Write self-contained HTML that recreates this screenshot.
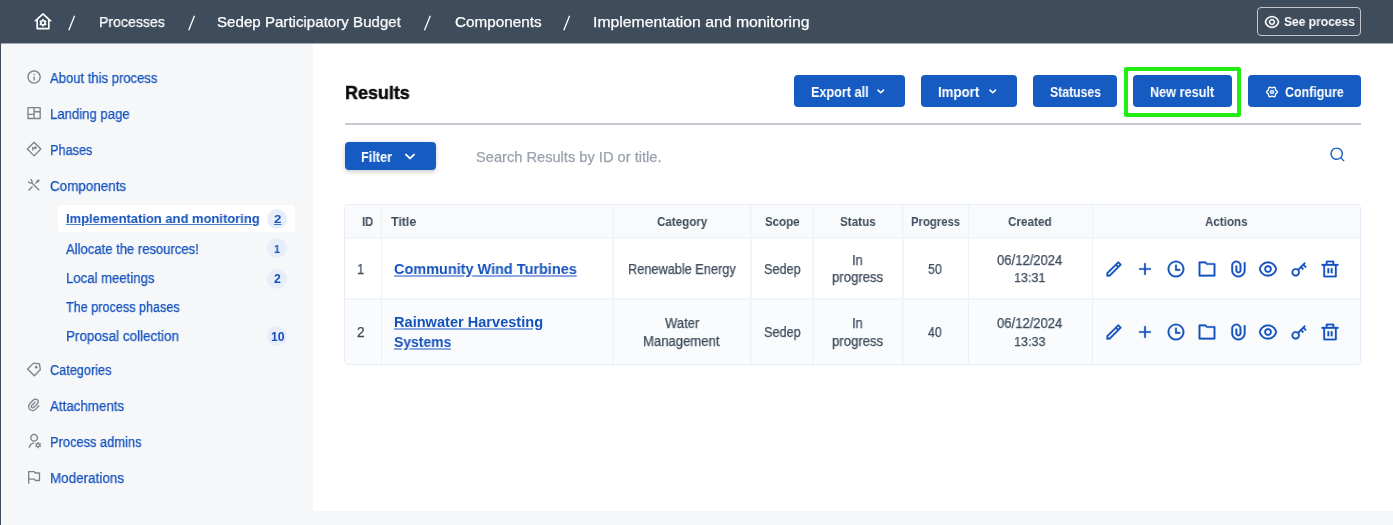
<!DOCTYPE html>
<html><head><meta charset="utf-8"><title>Results</title>
<style>
html,body{margin:0;padding:0;}
body{width:1393px;height:525px;overflow:hidden;position:relative;font-family:"Liberation Sans", sans-serif;background:#f6f7f9;}
.t{position:absolute;white-space:nowrap;will-change:transform;}
svg{display:block}
</style></head><body>
<div style="position:absolute;left:313px;top:43px;width:1080px;height:468px;background:#fff"></div>
<div style="position:absolute;left:0px;top:43px;width:1px;height:482px;background:#3e4c5c"></div>
<div style="position:absolute;left:0px;top:0px;width:1393px;height:43px;background:#3e4c5c"></div>
<div style="position:absolute;left:0px;top:43px;width:1393px;height:1px;background:rgba(62,76,92,.45)"></div>
<svg style="position:absolute;left:33.20px;top:11.60px;" width="20" height="20" viewBox="0 0 24 24" fill="#fff"><path d="M19 21H5C4.44772 21 4 20.5523 4 20V11L1 11L11.3273 1.6115C11.7087 1.26475 12.2913 1.26475 12.6727 1.6115L23 11L20 11V20C20 20.5523 19.5523 21 19 21ZM6 19H18V9.15745L12 3.7029L6 9.15745V19ZM8.59117 13.8089C8.52937 13.5486 8.50001 13.2762 8.50001 13C8.50001 12.7238 8.52937 12.4514 8.59117 12.1911L7.59688 11.6172L8.59688 9.88517L9.59275 10.4601C9.98516 10.0889 10.4647 9.80822 10.9995 9.65185V8.5H12.9995V9.65185C13.5343 9.80822 14.0138 10.0889 14.4062 10.4601L15.4021 9.88517L16.4021 11.6172L15.4078 12.1911C15.4696 12.4514 15.5 12.7238 15.5 13C15.5 13.2762 15.4696 13.5486 15.4078 13.8089L16.4021 14.3828L15.4021 16.1148L14.4062 15.5399C14.0138 15.9111 13.5343 16.1918 12.9995 16.3482V17.5H10.9995V16.3482C10.4647 16.1918 9.98516 15.9111 9.59275 15.5399L8.59688 16.1148L7.59688 14.3828L8.59117 13.8089ZM12 14.5C12.8284 14.5 13.5 13.8284 13.5 13C13.5 12.1716 12.8284 11.5 12 11.5C11.1716 11.5 10.5 12.1716 10.5 13C10.5 13.8284 11.1716 14.5 12 14.5Z"/></svg>
<svg style="position:absolute;left:0;top:0" width="1393" height="43"><line x1="74.6" y1="15.8" x2="68.8" y2="30.2" stroke="#fff" stroke-width="1.3"/></svg>
<svg style="position:absolute;left:0;top:0" width="1393" height="43"><line x1="194.5" y1="15.8" x2="188.7" y2="30.2" stroke="#fff" stroke-width="1.3"/></svg>
<svg style="position:absolute;left:0;top:0" width="1393" height="43"><line x1="430.3" y1="15.8" x2="424.5" y2="30.2" stroke="#fff" stroke-width="1.3"/></svg>
<svg style="position:absolute;left:0;top:0" width="1393" height="43"><line x1="569.6" y1="15.8" x2="563.8" y2="30.2" stroke="#fff" stroke-width="1.3"/></svg>
<div style="position:absolute;left:1257px;top:7px;width:102px;height:27px;border:1px solid #c3c7cd;border-radius:4px"></div>
<svg style="position:absolute;left:1263.80px;top:13.90px;" width="16" height="16" viewBox="0 0 24 24" fill="#fff" stroke="#fff" stroke-width="0.4"><path d="M12.0003 3C17.3924 3 21.8784 6.87976 22.8189 12C21.8784 17.1202 17.3924 21 12.0003 21C6.60812 21 2.12215 17.1202 1.18164 12C2.12215 6.87976 6.60812 3 12.0003 3ZM12.0003 19C16.2359 19 19.8603 16.052 20.7777 12C19.8603 7.94803 16.2359 5 12.0003 5C7.7646 5 4.14022 7.94803 3.22278 12C4.14022 16.052 7.7646 19 12.0003 19ZM12.0003 16.5C9.51498 16.5 7.50026 14.4853 7.50026 12C7.50026 9.51472 9.51498 7.5 12.0003 7.5C14.4855 7.5 16.5003 9.51472 16.5003 12C16.5003 14.4853 14.4855 16.5 12.0003 16.5ZM12.0003 14.5C13.381 14.5 14.5003 13.3807 14.5003 12C14.5003 10.6193 13.381 9.5 12.0003 9.5C10.6196 9.5 9.50026 10.6193 9.50026 12C9.50026 13.3807 10.6196 14.5 12.0003 14.5Z"/></svg>
<svg style="position:absolute;left:25.90px;top:69.40px;" width="16.2" height="16.2" viewBox="0 0 24 24" fill="#7b838d"><path d="M12 22C6.47715 22 2 17.5228 2 12C2 6.47715 6.47715 2 12 2C17.5228 2 22 6.47715 22 12C22 17.5228 17.5228 22 12 22ZM12 20C16.4183 20 20 16.4183 20 12C20 7.58172 16.4183 4 12 4C7.58172 4 4 7.58172 4 12C4 16.4183 7.58172 20 12 20ZM11 7H13V9H11V7ZM11 11H13V17H11V11Z"/></svg>
<svg style="position:absolute;left:25.90px;top:105.40px;" width="16.2" height="16.2" viewBox="0 0 24 24" fill="#7b838d"><path d="M22 20C22 20.5523 21.5523 21 21 21H3C2.44772 21 2 20.5523 2 20V4C2 3.44772 2.44772 3 3 3H21C21.5523 3 22 3.44772 22 4V20ZM11 15H4V19H11V15ZM20 11H13V19H20V11ZM11 5H4V13H11V5ZM20 5H13V9H20V5Z"/></svg>
<svg style="position:absolute;left:25.90px;top:141.40px;" width="16.2" height="16.2" viewBox="0 0 24 24" fill="#7b838d"><path d="M9 10C9 9.44772 9.44772 9 10 9H13V6.5L16.5 10L13 13.5V11H11V14H9V10ZM12.7071 1.29289L22.7071 11.2929C23.0976 11.6834 23.0976 12.3166 22.7071 12.7071L12.7071 22.7071C12.3166 23.0976 11.6834 23.0976 11.2929 22.7071L1.29289 12.7071C0.902369 12.3166 0.902369 11.6834 1.29289 11.2929L11.2929 1.29289C11.6834 0.902369 12.3166 0.902369 12.7071 1.29289ZM3.41421 12L12 20.5858L20.5858 12L12 3.41421L3.41421 12Z"/></svg>
<svg style="position:absolute;left:25.90px;top:177.40px;" width="16.2" height="16.2" viewBox="0 0 24 24" fill="#7b838d"><path d="M5.32943 3.27158C6.56252 2.8332 7.9923 3.10749 8.97927 4.09446C10.1002 5.21537 10.3019 6.90741 9.5843 8.23385L20.293 18.9437L18.8788 20.3579L8.16982 9.64875C6.84325 10.3669 5.15069 10.1654 4.02952 9.04421C3.04227 8.05696 2.7681 6.62665 3.20701 5.39332L5.44373 7.63C6.02952 8.21578 6.97927 8.21578 7.56505 7.63C8.15084 7.04421 8.15084 6.09446 7.56505 5.50868L5.32943 3.27158ZM15.6968 5.15512L18.8788 3.38736L20.293 4.80157L18.5252 7.98355L16.7574 8.3371L14.6361 10.4584L13.2219 9.04421L15.3432 6.92289L15.6968 5.15512ZM8.97927 13.2868L10.3935 14.7011L5.09018 20.0044C4.69966 20.3949 4.06649 20.3949 3.67597 20.0044C3.31334 19.6417 3.28744 19.0699 3.59826 18.6774L3.67597 18.5902L8.97927 13.2868Z"/></svg>
<svg style="position:absolute;left:25.90px;top:361.40px;" width="16.2" height="16.2" viewBox="0 0 24 24" fill="#7b838d"><path d="M10.9042 2.1001L20.8037 3.51431L22.2179 13.4138L13.0255 22.6062C12.635 22.9967 12.0019 22.9967 11.6113 22.6062L1.71184 12.7067C1.32131 12.3162 1.32131 11.683 1.71184 11.2925L10.9042 2.1001ZM11.6113 4.22142L3.83316 11.9996L12.3184 20.4849L20.0966 12.7067L19.0359 5.28208L11.6113 4.22142ZM13.7327 10.5854C12.9516 9.80433 12.9516 8.538 13.7327 7.75695C14.5137 6.9759 15.78 6.9759 16.5611 7.75695C17.3421 8.538 17.3421 9.80433 16.5611 10.5854C15.78 11.3664 14.5137 11.3664 13.7327 10.5854Z"/></svg>
<svg style="position:absolute;left:25.90px;top:397.40px;" width="16.2" height="16.2" viewBox="0 0 24 24" fill="#7b838d"><path d="M14.8287 7.75737L9.1718 13.4142C8.78127 13.8047 8.78127 14.4379 9.1718 14.8284C9.56232 15.219 10.1955 15.219 10.586 14.8284L16.2429 9.17158C17.4144 8.00001 17.4144 6.10052 16.2429 4.92894C15.0713 3.75737 13.1718 3.75737 12.0002 4.92894L6.34337 10.5858C4.39075 12.5384 4.39075 15.7042 6.34337 17.6569C8.29599 19.6095 11.4618 19.6095 13.4144 17.6569L19.0713 12L20.4855 13.4142L14.8287 19.0711C12.095 21.8047 7.66283 21.8047 4.92916 19.0711C2.19549 16.3374 2.19549 11.9052 4.92916 9.17158L10.586 3.51473C12.5386 1.56211 15.7045 1.56211 17.6571 3.51473C19.6097 5.46735 19.6097 8.63317 17.6571 10.5858L12.0002 16.2427C10.8287 17.4142 8.92916 17.4142 7.75759 16.2427C6.58601 15.0711 6.58601 13.1716 7.75759 12L13.4144 6.34316L14.8287 7.75737Z"/></svg>
<svg style="position:absolute;left:25.90px;top:433.40px;" width="16.2" height="16.2" viewBox="0 0 24 24" fill="#7b838d"><path d="M12 14V16C8.68629 16 6 18.6863 6 22H4C4 17.5817 7.58172 14 12 14ZM12 13C8.685 13 6 10.315 6 7C6 3.685 8.685 1 12 1C15.315 1 18 3.685 18 7C18 10.315 15.315 13 12 13ZM12 11C14.21 11 16 9.21 16 7C16 4.79 14.21 3 12 3C9.79 3 8 4.79 8 7C8 9.21 9.79 11 12 11ZM14.5946 18.8115C14.5327 18.5511 14.5 18.2794 14.5 18C14.5 17.7207 14.5327 17.449 14.5945 17.1886L13.6029 16.6161L14.6029 14.884L15.5952 15.4569C15.9883 15.0851 16.4676 14.8034 17 14.6449V13.5H19V14.6449C19.5324 14.8034 20.0116 15.0851 20.4047 15.4569L21.3971 14.8839L22.3972 16.616L21.4055 17.1885C21.4673 17.449 21.5 17.7207 21.5 18C21.5 18.2793 21.4673 18.551 21.4055 18.8114L22.3972 19.3839L21.3972 21.116L20.4048 20.543C20.0117 20.9149 19.5325 21.1966 19.0001 21.355V22.5H17.0001V21.3551C16.4677 21.1967 15.9884 20.915 15.5953 20.5431L14.603 21.1161L13.6029 19.384L14.5946 18.8115ZM18 19.5C18.8284 19.5 19.5 18.8284 19.5 18C19.5 17.1716 18.8284 16.5 18 16.5C17.1716 16.5 16.5 17.1716 16.5 18C16.5 18.8284 17.1716 19.5 18 19.5Z"/></svg>
<svg style="position:absolute;left:25.90px;top:469.40px;" width="16.2" height="16.2" viewBox="0 0 24 24" fill="#7b838d"><path d="M5 16V22H3V3H12.382C12.7607 3 13.107 3.214 13.2764 3.55279L14 5H20C20.5523 5 21 5.44772 21 6V17C21 17.5523 20.5523 18 20 18H13.618C13.2393 18 12.893 17.786 12.7236 17.4472L12 16H5ZM5 5V14H13.236L14.236 16H19V7H12.764L11.764 5H5Z"/></svg>
<div style="position:absolute;left:58px;top:205px;width:237px;height:27px;background:#fff;border-radius:3px"></div>
<div style="position:absolute;left:267.4px;top:208.6px;width:20px;height:20px;background:#e8eef9;border-radius:50%"></div>
<div style="position:absolute;left:267.4px;top:238px;width:20px;height:20px;background:#e8eef9;border-radius:50%"></div>
<div style="position:absolute;left:267.4px;top:268.6px;width:20px;height:20px;background:#e8eef9;border-radius:50%"></div>
<div style="position:absolute;left:267.4px;top:326.2px;width:20px;height:20px;background:#e8eef9;border-radius:50%"></div>
<div style="position:absolute;left:345px;top:123px;width:1016px;height:2px;background:#c6cad1"></div>
<div style="position:absolute;left:794px;top:75px;width:111px;height:32px;background:#165bc2;border-radius:4px"></div>
<div style="position:absolute;left:921px;top:75px;width:96px;height:32px;background:#165bc2;border-radius:4px"></div>
<div style="position:absolute;left:1033px;top:75px;width:84px;height:32px;background:#165bc2;border-radius:4px"></div>
<div style="position:absolute;left:1133px;top:75px;width:99px;height:32px;background:#165bc2;border-radius:4px"></div>
<div style="position:absolute;left:1248px;top:75px;width:113px;height:32px;background:#165bc2;border-radius:4px"></div>
<div style="position:absolute;left:1124px;top:67px;width:109px;height:41.5px;border:4px solid #22ee14;border-radius:2px"></div>
<svg style="position:absolute;left:1264px;top:83.6px" width="16" height="16" viewBox="0 0 16 16" fill="none" stroke="#fff" stroke-width="1.35"><polygon points="13.35,8.00 13.31,8.28 13.21,8.55 13.04,8.80 12.83,9.03 12.59,9.23 12.34,9.41 12.11,9.58 11.90,9.73 11.72,9.90 11.59,10.07 11.51,10.28 11.45,10.51 11.42,10.77 11.39,11.05 11.36,11.36 11.30,11.67 11.21,11.97 11.08,12.24 10.90,12.46 10.68,12.63 10.42,12.74 10.13,12.78 9.83,12.76 9.53,12.69 9.23,12.59 8.95,12.46 8.69,12.34 8.45,12.24 8.22,12.17 8.00,12.15 7.78,12.17 7.55,12.24 7.31,12.34 7.05,12.46 6.77,12.59 6.47,12.69 6.17,12.76 5.87,12.78 5.58,12.74 5.33,12.63 5.10,12.46 4.92,12.24 4.79,11.97 4.70,11.67 4.64,11.36 4.61,11.05 4.58,10.77 4.55,10.51 4.49,10.28 4.41,10.07 4.28,9.90 4.10,9.73 3.89,9.58 3.66,9.41 3.41,9.23 3.17,9.03 2.96,8.80 2.79,8.55 2.69,8.28 2.65,8.00 2.69,7.72 2.79,7.45 2.96,7.20 3.17,6.97 3.41,6.77 3.66,6.59 3.89,6.42 4.10,6.27 4.28,6.10 4.41,5.93 4.49,5.72 4.55,5.49 4.58,5.23 4.61,4.95 4.64,4.64 4.70,4.33 4.79,4.03 4.92,3.76 5.10,3.54 5.32,3.37 5.58,3.26 5.87,3.22 6.17,3.24 6.47,3.31 6.77,3.41 7.05,3.54 7.31,3.66 7.55,3.76 7.78,3.83 8.00,3.85 8.22,3.83 8.45,3.76 8.69,3.66 8.95,3.54 9.23,3.41 9.53,3.31 9.83,3.24 10.13,3.22 10.42,3.26 10.68,3.37 10.90,3.54 11.08,3.76 11.21,4.03 11.30,4.33 11.36,4.64 11.39,4.95 11.42,5.23 11.45,5.49 11.51,5.72 11.59,5.93 11.72,6.10 11.90,6.27 12.11,6.42 12.34,6.59 12.59,6.77 12.83,6.97 13.04,7.20 13.21,7.45 13.31,7.72 13.35,8.00"/><ellipse cx="8" cy="8" rx="1.7" ry="1.3"/></svg>
<div style="position:absolute;left:344.5px;top:142.4px;width:91.5px;height:28px;background:#165bc2;border-radius:4px;box-shadow:0 1.5px 4px rgba(0,0,0,.2)"></div>
<svg style="position:absolute;left:0;top:0" width="1393" height="200"><g fill="none" stroke="#fff" stroke-linecap="round" stroke-linejoin="round"><polyline stroke-width="1.5" points="878,90.1 880.75,92.75 883.5,90.1"/><polyline stroke-width="1.5" points="990,90.1 992.75,92.75 995.5,90.1"/><polyline stroke-width="1.9" points="406,154.6 410,158.4 414,154.6"/></g></svg>
<svg style="position:absolute;left:1328.50px;top:146.20px;" width="16.8" height="16.8" viewBox="0 0 24 24" fill="#165bc2"><path d="M18.031 16.6168L22.3137 20.8995L20.8995 22.3137L16.6168 18.031C15.0769 19.263 13.124 20 11 20C6.032 20 2 15.968 2 11C2 6.032 6.032 2 11 2C15.968 2 20 6.032 20 11C20 13.124 19.263 15.0769 18.031 16.6168ZM16.0247 15.8748C17.2475 14.6146 18 12.8956 18 11C18 7.1325 14.8675 4 11 4C7.1325 4 4 7.1325 4 11C4 14.8675 7.1325 18 11 18C12.8956 18 14.6146 17.2475 15.8748 16.0247L16.0247 15.8748Z"/></svg>
<div style="position:absolute;left:344px;top:204px;width:1017px;height:161px;background:#fff;border:1px solid #e8eef8;border-radius:4px;box-sizing:border-box"></div>
<div style="position:absolute;left:345px;top:205px;width:1015px;height:32px;background:#f9fafc;border-radius:3px 3px 0 0"></div>
<div style="position:absolute;left:345px;top:299px;width:1015px;height:65px;background:#fafbfd;border-radius:0 0 3px 3px"></div>
<div style="position:absolute;left:345px;top:237px;width:1015px;height:2px;background:#f1f4fa"></div>
<div style="position:absolute;left:345px;top:298px;width:1015px;height:2px;background:#f1f4fa"></div>
<div style="position:absolute;left:381px;top:205px;width:1px;height:159px;background:#ebf0fa"></div>
<div style="position:absolute;left:612px;top:205px;width:2px;height:159px;background:#f1f4fb"></div>
<div style="position:absolute;left:750px;top:205px;width:2px;height:159px;background:#f1f4fb"></div>
<div style="position:absolute;left:812px;top:205px;width:2px;height:159px;background:#f1f4fb"></div>
<div style="position:absolute;left:902px;top:205px;width:2px;height:159px;background:#f1f4fb"></div>
<div style="position:absolute;left:968px;top:205px;width:1px;height:159px;background:#ebf0fa"></div>
<div style="position:absolute;left:1092px;top:205px;width:1px;height:159px;background:#ebf0fa"></div>
<svg style="position:absolute;left:1104.00px;top:259.00px;" width="20" height="20" viewBox="0 0 24 24" fill="#1452bd" stroke="#1452bd" stroke-width="0.3"><path d="M15.7279 9.57627L14.3137 8.16206L5 17.4758V18.89H6.41421L15.7279 9.57627ZM17.1421 8.16206L18.5563 6.74785L17.1421 5.33363L15.7279 6.74785L17.1421 8.16206ZM7.24264 20.89H3V16.6473L16.435 3.21231C16.8256 2.82179 17.4587 2.82179 17.8492 3.21231L20.6777 6.04074C21.0682 6.43126 21.0682 7.06443 20.6777 7.45495L7.24264 20.89Z"/></svg>
<svg style="position:absolute;left:1134.50px;top:259.00px;" width="20" height="20" viewBox="0 0 24 24" fill="#1452bd" stroke="#1452bd" stroke-width="0.3"><path d="M11 11V5H13V11H19V13H13V19H11V13H5V11H11Z"/></svg>
<svg style="position:absolute;left:1165.50px;top:259.00px;" width="20" height="20" viewBox="0 0 24 24" fill="#1452bd" stroke="#1452bd" stroke-width="0.3"><path d="M12 22C6.47715 22 2 17.5228 2 12C2 6.47715 6.47715 2 12 2C17.5228 2 22 6.47715 22 12C22 17.5228 17.5228 22 12 22ZM12 20C16.4183 20 20 16.4183 20 12C20 7.58172 16.4183 4 12 4C7.58172 4 4 7.58172 4 12C4 16.4183 7.58172 20 12 20ZM13 12H17V14H11V7H13V12Z"/></svg>
<svg style="position:absolute;left:1196.50px;top:259.00px;" width="20" height="20" viewBox="0 0 24 24" fill="#1452bd" stroke="#1452bd" stroke-width="0.3"><path d="M4 5V19H20V7H11.5858L9.58579 5H4ZM12.4142 5H21C21.5523 5 22 5.44772 22 6V20C22 20.5523 21.5523 21 21 21H3C2.44772 21 2 20.5523 2 20V4C2 3.44772 2.44772 3 3 3H10.4142L12.4142 5Z"/></svg>
<svg style="position:absolute;left:1227.50px;top:259.00px;" width="20" height="20" viewBox="0 0 24 24" fill="#1452bd" stroke="#1452bd" stroke-width="0.3"><path d="M14 13.5V8C14 5.79086 12.2091 4 10 4C7.79086 4 6 5.79086 6 8V13.5C6 17.0899 8.91015 20 12.5 20C16.0899 20 19 17.0899 19 13.5V4H21V13.5C21 18.1944 17.1944 22 12.5 22C7.80558 22 4 18.1944 4 13.5V8C4 4.68629 6.68629 2 10 2C13.3137 2 16 4.68629 16 8V13.5C16 15.433 14.433 17 12.5 17C10.567 17 9 15.433 9 13.5V8H11V13.5C11 14.3284 11.6716 15 12.5 15C13.3284 15 14 14.3284 14 13.5Z"/></svg>
<svg style="position:absolute;left:1258.00px;top:259.00px;" width="20" height="20" viewBox="0 0 24 24" fill="#1452bd" stroke="#1452bd" stroke-width="0.3"><path d="M12.0003 3C17.3924 3 21.8784 6.87976 22.8189 12C21.8784 17.1202 17.3924 21 12.0003 21C6.60812 21 2.12215 17.1202 1.18164 12C2.12215 6.87976 6.60812 3 12.0003 3ZM12.0003 19C16.2359 19 19.8603 16.052 20.7777 12C19.8603 7.94803 16.2359 5 12.0003 5C7.7646 5 4.14022 7.94803 3.22278 12C4.14022 16.052 7.7646 19 12.0003 19ZM12.0003 16.5C9.51498 16.5 7.50026 14.4853 7.50026 12C7.50026 9.51472 9.51498 7.5 12.0003 7.5C14.4855 7.5 16.5003 9.51472 16.5003 12C16.5003 14.4853 14.4855 16.5 12.0003 16.5ZM12.0003 14.5C13.381 14.5 14.5003 13.3807 14.5003 12C14.5003 10.6193 13.381 9.5 12.0003 9.5C10.6196 9.5 9.50026 10.6193 9.50026 12C9.50026 13.3807 10.6196 14.5 12.0003 14.5Z"/></svg>
<svg style="position:absolute;left:1288.50px;top:259.00px;" width="20" height="20" viewBox="0 0 24 24" fill="#1452bd" stroke="#1452bd" stroke-width="0.3"><path d="M10.7577 11.8281L18.6066 3.97919L20.0208 5.3934L18.6066 6.80761L21.0815 9.28249L19.6673 10.6967L17.1924 8.22183L15.7782 9.63604L17.8995 11.7574L16.4853 13.1716L14.364 11.0503L12.1719 13.2423C13.4581 15.1837 13.246 17.8251 11.5355 19.5355C9.58291 21.4882 6.41709 21.4882 4.46447 19.5355C2.51184 17.5829 2.51184 14.4171 4.46447 12.4645C6.17493 10.754 8.81633 10.5419 10.7577 11.8281ZM10.1213 18.1213C11.2929 16.9497 11.2929 15.0503 10.1213 13.8787C8.94975 12.7071 7.05025 12.7071 5.87868 13.8787C4.70711 15.0503 4.70711 16.9497 5.87868 18.1213C7.05025 19.2929 8.94975 19.2929 10.1213 18.1213Z"/></svg>
<svg style="position:absolute;left:1319.50px;top:259.00px;" width="20" height="20" viewBox="0 0 24 24" fill="#1452bd" stroke="#1452bd" stroke-width="0.3"><path d="M17 6H22V8H20V21C20 21.5523 19.5523 22 19 22H5C4.44772 22 4 21.5523 4 21V8H2V6H7V3C7 2.44772 7.44772 2 8 2H16C16.5523 2 17 2.44772 17 3V6ZM18 8H6V20H18V8ZM9 11H11V17H9V11ZM13 11H15V17H13V11ZM9 4V6H15V4H9Z"/></svg>
<svg style="position:absolute;left:1104.00px;top:322.00px;" width="20" height="20" viewBox="0 0 24 24" fill="#1452bd" stroke="#1452bd" stroke-width="0.3"><path d="M15.7279 9.57627L14.3137 8.16206L5 17.4758V18.89H6.41421L15.7279 9.57627ZM17.1421 8.16206L18.5563 6.74785L17.1421 5.33363L15.7279 6.74785L17.1421 8.16206ZM7.24264 20.89H3V16.6473L16.435 3.21231C16.8256 2.82179 17.4587 2.82179 17.8492 3.21231L20.6777 6.04074C21.0682 6.43126 21.0682 7.06443 20.6777 7.45495L7.24264 20.89Z"/></svg>
<svg style="position:absolute;left:1134.50px;top:322.00px;" width="20" height="20" viewBox="0 0 24 24" fill="#1452bd" stroke="#1452bd" stroke-width="0.3"><path d="M11 11V5H13V11H19V13H13V19H11V13H5V11H11Z"/></svg>
<svg style="position:absolute;left:1165.50px;top:322.00px;" width="20" height="20" viewBox="0 0 24 24" fill="#1452bd" stroke="#1452bd" stroke-width="0.3"><path d="M12 22C6.47715 22 2 17.5228 2 12C2 6.47715 6.47715 2 12 2C17.5228 2 22 6.47715 22 12C22 17.5228 17.5228 22 12 22ZM12 20C16.4183 20 20 16.4183 20 12C20 7.58172 16.4183 4 12 4C7.58172 4 4 7.58172 4 12C4 16.4183 7.58172 20 12 20ZM13 12H17V14H11V7H13V12Z"/></svg>
<svg style="position:absolute;left:1196.50px;top:322.00px;" width="20" height="20" viewBox="0 0 24 24" fill="#1452bd" stroke="#1452bd" stroke-width="0.3"><path d="M4 5V19H20V7H11.5858L9.58579 5H4ZM12.4142 5H21C21.5523 5 22 5.44772 22 6V20C22 20.5523 21.5523 21 21 21H3C2.44772 21 2 20.5523 2 20V4C2 3.44772 2.44772 3 3 3H10.4142L12.4142 5Z"/></svg>
<svg style="position:absolute;left:1227.50px;top:322.00px;" width="20" height="20" viewBox="0 0 24 24" fill="#1452bd" stroke="#1452bd" stroke-width="0.3"><path d="M14 13.5V8C14 5.79086 12.2091 4 10 4C7.79086 4 6 5.79086 6 8V13.5C6 17.0899 8.91015 20 12.5 20C16.0899 20 19 17.0899 19 13.5V4H21V13.5C21 18.1944 17.1944 22 12.5 22C7.80558 22 4 18.1944 4 13.5V8C4 4.68629 6.68629 2 10 2C13.3137 2 16 4.68629 16 8V13.5C16 15.433 14.433 17 12.5 17C10.567 17 9 15.433 9 13.5V8H11V13.5C11 14.3284 11.6716 15 12.5 15C13.3284 15 14 14.3284 14 13.5Z"/></svg>
<svg style="position:absolute;left:1258.00px;top:322.00px;" width="20" height="20" viewBox="0 0 24 24" fill="#1452bd" stroke="#1452bd" stroke-width="0.3"><path d="M12.0003 3C17.3924 3 21.8784 6.87976 22.8189 12C21.8784 17.1202 17.3924 21 12.0003 21C6.60812 21 2.12215 17.1202 1.18164 12C2.12215 6.87976 6.60812 3 12.0003 3ZM12.0003 19C16.2359 19 19.8603 16.052 20.7777 12C19.8603 7.94803 16.2359 5 12.0003 5C7.7646 5 4.14022 7.94803 3.22278 12C4.14022 16.052 7.7646 19 12.0003 19ZM12.0003 16.5C9.51498 16.5 7.50026 14.4853 7.50026 12C7.50026 9.51472 9.51498 7.5 12.0003 7.5C14.4855 7.5 16.5003 9.51472 16.5003 12C16.5003 14.4853 14.4855 16.5 12.0003 16.5ZM12.0003 14.5C13.381 14.5 14.5003 13.3807 14.5003 12C14.5003 10.6193 13.381 9.5 12.0003 9.5C10.6196 9.5 9.50026 10.6193 9.50026 12C9.50026 13.3807 10.6196 14.5 12.0003 14.5Z"/></svg>
<svg style="position:absolute;left:1288.50px;top:322.00px;" width="20" height="20" viewBox="0 0 24 24" fill="#1452bd" stroke="#1452bd" stroke-width="0.3"><path d="M10.7577 11.8281L18.6066 3.97919L20.0208 5.3934L18.6066 6.80761L21.0815 9.28249L19.6673 10.6967L17.1924 8.22183L15.7782 9.63604L17.8995 11.7574L16.4853 13.1716L14.364 11.0503L12.1719 13.2423C13.4581 15.1837 13.246 17.8251 11.5355 19.5355C9.58291 21.4882 6.41709 21.4882 4.46447 19.5355C2.51184 17.5829 2.51184 14.4171 4.46447 12.4645C6.17493 10.754 8.81633 10.5419 10.7577 11.8281ZM10.1213 18.1213C11.2929 16.9497 11.2929 15.0503 10.1213 13.8787C8.94975 12.7071 7.05025 12.7071 5.87868 13.8787C4.70711 15.0503 4.70711 16.9497 5.87868 18.1213C7.05025 19.2929 8.94975 19.2929 10.1213 18.1213Z"/></svg>
<svg style="position:absolute;left:1319.50px;top:322.00px;" width="20" height="20" viewBox="0 0 24 24" fill="#1452bd" stroke="#1452bd" stroke-width="0.3"><path d="M17 6H22V8H20V21C20 21.5523 19.5523 22 19 22H5C4.44772 22 4 21.5523 4 21V8H2V6H7V3C7 2.44772 7.44772 2 8 2H16C16.5523 2 17 2.44772 17 3V6ZM18 8H6V20H18V8ZM9 11H11V17H9V11ZM13 11H15V17H13V11ZM9 4V6H15V4H9Z"/></svg>
<div class="t" id="t0" style="left:99.07px;top:13.55px;font-size:15.116px;line-height:15.116px;font-weight:400;color:#fff;transform:scaleX(0.9333);transform-origin:0 0;-webkit-text-stroke:0.25px #fff;">Processes</div>
<div class="t" id="t1" style="left:217.04px;top:13.55px;font-size:15.116px;line-height:15.116px;font-weight:400;color:#fff;transform:scaleX(0.9992);transform-origin:0 0;-webkit-text-stroke:0.25px #fff;">Sedep Participatory Budget</div>
<div class="t" id="t2" style="left:454.53px;top:13.55px;font-size:15.116px;line-height:15.116px;font-weight:400;color:#fff;transform:scaleX(1.0126);transform-origin:0 0;-webkit-text-stroke:0.25px #fff;">Components</div>
<div class="t" id="t3" style="left:593.43px;top:13.55px;font-size:15.116px;line-height:15.116px;font-weight:400;color:#fff;transform:scaleX(1.0440);transform-origin:0 0;-webkit-text-stroke:0.25px #fff;">Implementation and monitoring</div>
<div class="t" id="t4" style="left:1283.60px;top:15.50px;font-size:12.936px;line-height:12.936px;font-weight:700;color:#fff;transform:scaleX(0.9306);transform-origin:0 0;">See process</div>
<div class="t" id="t5" style="left:50.28px;top:70.59px;font-size:14.244px;line-height:14.244px;font-weight:400;color:#1452bd;transform:scaleX(0.9171);transform-origin:0 0;-webkit-text-stroke:0.25px #1452bd;">About this process</div>
<div class="t" id="t6" style="left:49.65px;top:106.59px;font-size:14.244px;line-height:14.244px;font-weight:400;color:#1452bd;transform:scaleX(0.9242);transform-origin:0 0;-webkit-text-stroke:0.25px #1452bd;">Landing page</div>
<div class="t" id="t7" style="left:49.68px;top:142.59px;font-size:14.244px;line-height:14.244px;font-weight:400;color:#1452bd;transform:scaleX(0.8928);transform-origin:0 0;-webkit-text-stroke:0.25px #1452bd;">Phases</div>
<div class="t" id="t8" style="left:50.16px;top:178.59px;font-size:14.244px;line-height:14.244px;font-weight:400;color:#1452bd;transform:scaleX(0.9428);transform-origin:0 0;-webkit-text-stroke:0.25px #1452bd;">Components</div>
<div class="t" id="t9" style="left:50.17px;top:362.89px;font-size:14.244px;line-height:14.244px;font-weight:400;color:#1452bd;transform:scaleX(0.8925);transform-origin:0 0;-webkit-text-stroke:0.25px #1452bd;">Categories</div>
<div class="t" id="t10" style="left:50.28px;top:398.89px;font-size:14.244px;line-height:14.244px;font-weight:400;color:#1452bd;transform:scaleX(0.9369);transform-origin:0 0;-webkit-text-stroke:0.25px #1452bd;">Attachments</div>
<div class="t" id="t11" style="left:49.67px;top:434.89px;font-size:14.244px;line-height:14.244px;font-weight:400;color:#1452bd;transform:scaleX(0.9037);transform-origin:0 0;-webkit-text-stroke:0.25px #1452bd;">Process admins</div>
<div class="t" id="t12" style="left:49.64px;top:470.89px;font-size:14.244px;line-height:14.244px;font-weight:400;color:#1452bd;transform:scaleX(0.9452);transform-origin:0 0;-webkit-text-stroke:0.25px #1452bd;">Moderations</div>
<div class="t" id="t13" style="left:66.15px;top:211.69px;font-size:13.663px;line-height:13.663px;font-weight:700;color:#1452bd;transform:scaleX(0.9488);transform-origin:0 0;text-decoration:underline;text-decoration-color:rgba(26,86,192,.75);text-decoration-thickness:1.2px;text-underline-offset:0.8px;">Implementation and monitoring</div>
<div class="t" id="t14" style="left:66.28px;top:242.27px;font-size:14.390px;line-height:14.390px;font-weight:400;color:#1452bd;transform:scaleX(0.9082);transform-origin:0 0;-webkit-text-stroke:0.25px #1452bd;">Allocate the resources!</div>
<div class="t" id="t15" style="left:65.66px;top:271.17px;font-size:14.390px;line-height:14.390px;font-weight:400;color:#1452bd;transform:scaleX(0.9150);transform-origin:0 0;-webkit-text-stroke:0.25px #1452bd;">Local meetings</div>
<div class="t" id="t16" style="left:66.41px;top:299.97px;font-size:14.390px;line-height:14.390px;font-weight:400;color:#1452bd;transform:scaleX(0.8789);transform-origin:0 0;-webkit-text-stroke:0.25px #1452bd;">The process phases</div>
<div class="t" id="t17" style="left:65.64px;top:328.97px;font-size:14.390px;line-height:14.390px;font-weight:400;color:#1452bd;transform:scaleX(0.9361);transform-origin:0 0;-webkit-text-stroke:0.25px #1452bd;">Proposal collection</div>
<div class="t" id="t18" style="left:274.25px;top:212.72px;font-size:11.628px;line-height:11.628px;font-weight:700;color:#1452bd;transform:scaleX(1.1504);transform-origin:0 0;text-decoration:underline;text-decoration-color:rgba(26,86,192,.8);text-decoration-thickness:1.2px;text-underline-offset:1.3px;">2</div>
<div class="t" id="t19" style="left:273.69px;top:243.12px;font-size:11.628px;line-height:11.628px;font-weight:700;color:#1452bd;transform:scaleX(0.9209);transform-origin:0 0;">1</div>
<div class="t" id="t20" style="left:274.25px;top:272.95px;font-size:12.064px;line-height:12.064px;font-weight:700;color:#1452bd;transform:scaleX(1.0174);transform-origin:0 0;">2</div>
<div class="t" id="t21" style="left:270.80px;top:330.75px;font-size:12.064px;line-height:12.064px;font-weight:700;color:#1452bd;transform:scaleX(1.0210);transform-origin:0 0;">10</div>
<div class="t" id="t22" style="left:344.92px;top:83.64px;font-size:18.895px;line-height:18.895px;font-weight:700;color:#0d0d0d;transform:scaleX(0.9482);transform-origin:0 0;-webkit-text-stroke:0.5px #0d0d0d;">Results</div>
<div class="t" id="t23" style="left:810.62px;top:85.74px;font-size:13.953px;line-height:13.953px;font-weight:700;color:#fff;transform:scaleX(0.9063);transform-origin:0 0;">Export all</div>
<div class="t" id="t24" style="left:937.77px;top:85.74px;font-size:13.953px;line-height:13.953px;font-weight:700;color:#fff;transform:scaleX(0.9510);transform-origin:0 0;">Import</div>
<div class="t" id="t25" style="left:1049.99px;top:85.74px;font-size:13.953px;line-height:13.953px;font-weight:700;color:#fff;transform:scaleX(0.8785);transform-origin:0 0;">Statuses</div>
<div class="t" id="t26" style="left:1150.38px;top:85.74px;font-size:13.953px;line-height:13.953px;font-weight:700;color:#fff;transform:scaleX(0.9099);transform-origin:0 0;">New result</div>
<div class="t" id="t27" style="left:1285.02px;top:85.74px;font-size:13.953px;line-height:13.953px;font-weight:700;color:#fff;transform:scaleX(0.8935);transform-origin:0 0;">Configure</div>
<div class="t" id="t28" style="left:360.96px;top:150.64px;font-size:13.953px;line-height:13.953px;font-weight:700;color:#fff;transform:scaleX(0.9096);transform-origin:0 0;">Filter</div>
<div class="t" id="t29" style="left:476.29px;top:150.32px;font-size:14.099px;line-height:14.099px;font-weight:400;color:#9aa2ad;transform:scaleX(1.0398);transform-origin:0 0;-webkit-text-stroke:0.25px #9aa2ad;">Search Results by ID or title.</div>
<div class="t" id="t30" style="left:361.81px;top:215.80px;font-size:12.936px;line-height:12.936px;font-weight:700;color:#3e4c5c;transform:scaleX(0.8746);transform-origin:0 0;">ID</div>
<div class="t" id="t31" style="left:390.51px;top:215.80px;font-size:12.936px;line-height:12.936px;font-weight:700;color:#3e4c5c;transform:scaleX(0.9565);transform-origin:0 0;">Title</div>
<div class="t" id="t32" style="left:656.65px;top:215.80px;font-size:12.936px;line-height:12.936px;font-weight:700;color:#3e4c5c;transform:scaleX(0.8979);transform-origin:0 0;">Category</div>
<div class="t" id="t33" style="left:764.61px;top:215.80px;font-size:12.936px;line-height:12.936px;font-weight:700;color:#3e4c5c;transform:scaleX(0.8922);transform-origin:0 0;">Scope</div>
<div class="t" id="t34" style="left:839.66px;top:215.80px;font-size:12.936px;line-height:12.936px;font-weight:700;color:#3e4c5c;transform:scaleX(0.9054);transform-origin:0 0;">Status</div>
<div class="t" id="t35" style="left:910.81px;top:215.80px;font-size:12.936px;line-height:12.936px;font-weight:700;color:#3e4c5c;transform:scaleX(0.8759);transform-origin:0 0;">Progress</div>
<div class="t" id="t36" style="left:1008.22px;top:215.80px;font-size:12.936px;line-height:12.936px;font-weight:700;color:#3e4c5c;transform:scaleX(0.9063);transform-origin:0 0;">Created</div>
<div class="t" id="t37" style="left:1205.20px;top:215.80px;font-size:12.936px;line-height:12.936px;font-weight:700;color:#3e4c5c;transform:scaleX(0.8975);transform-origin:0 0;">Actions</div>
<div class="t" id="t38" style="left:357.36px;top:263.06px;font-size:13.808px;line-height:13.808px;font-weight:400;color:#3e4c5c;transform:scaleX(0.9331);transform-origin:0 0;-webkit-text-stroke:0.25px #3e4c5c;">1</div>
<div class="t" id="t39" style="left:394.38px;top:262.40px;font-size:14.826px;line-height:14.826px;font-weight:700;color:#1452bd;transform:scaleX(0.9762);transform-origin:0 0;text-decoration:underline;text-decoration-color:rgba(26,86,192,.5);text-decoration-thickness:2px;text-underline-offset:1px;">Community Wind Turbines</div>
<div class="t" id="t40" style="left:628.08px;top:263.06px;font-size:13.808px;line-height:13.808px;font-weight:400;color:#3e4c5c;transform:scaleX(0.9240);transform-origin:0 0;-webkit-text-stroke:0.25px #3e4c5c;">Renewable Energy</div>
<div class="t" id="t41" style="left:763.75px;top:263.06px;font-size:13.808px;line-height:13.808px;font-weight:400;color:#3e4c5c;transform:scaleX(0.9182);transform-origin:0 0;-webkit-text-stroke:0.25px #3e4c5c;">Sedep</div>
<div class="t" id="t42" style="left:852.07px;top:253.84px;font-size:13.953px;line-height:13.953px;font-weight:400;color:#3e4c5c;transform:scaleX(0.9322);transform-origin:0 0;-webkit-text-stroke:0.25px #3e4c5c;">In</div>
<div class="t" id="t43" style="left:832.34px;top:270.54px;font-size:13.953px;line-height:13.953px;font-weight:400;color:#3e4c5c;transform:scaleX(0.9426);transform-origin:0 0;-webkit-text-stroke:0.25px #3e4c5c;">progress</div>
<div class="t" id="t44" style="left:927.82px;top:263.06px;font-size:13.808px;line-height:13.808px;font-weight:400;color:#3e4c5c;transform:scaleX(0.9003);transform-origin:0 0;-webkit-text-stroke:0.25px #3e4c5c;">50</div>
<div class="t" id="t45" style="left:997.42px;top:253.84px;font-size:13.953px;line-height:13.953px;font-weight:400;color:#3e4c5c;transform:scaleX(0.9352);transform-origin:0 0;-webkit-text-stroke:0.25px #3e4c5c;">06/12/2024</div>
<div class="t" id="t46" style="left:1014.00px;top:270.79px;font-size:13.663px;line-height:13.663px;font-weight:400;color:#3e4c5c;transform:scaleX(0.9196);transform-origin:0 0;-webkit-text-stroke:0.25px #3e4c5c;">13:31</div>
<div class="t" id="t47" style="left:357.16px;top:326.26px;font-size:13.808px;line-height:13.808px;font-weight:400;color:#3e4c5c;transform:scaleX(1.0015);transform-origin:0 0;-webkit-text-stroke:0.25px #3e4c5c;">2</div>
<div class="t" id="t48" style="left:394.32px;top:314.65px;font-size:14.535px;line-height:14.535px;font-weight:700;color:#1452bd;transform:scaleX(1.0043);transform-origin:0 0;text-decoration:underline;text-decoration-color:rgba(26,86,192,.5);text-decoration-thickness:2px;text-underline-offset:1px;">Rainwater Harvesting</div>
<div class="t" id="t49" style="left:394.35px;top:334.55px;font-size:14.535px;line-height:14.535px;font-weight:700;color:#1452bd;transform:scaleX(0.9580);transform-origin:0 0;text-decoration:underline;text-decoration-color:rgba(26,86,192,.5);text-decoration-thickness:2px;text-underline-offset:1px;">Systems</div>
<div class="t" id="t50" style="left:665.08px;top:317.16px;font-size:13.808px;line-height:13.808px;font-weight:400;color:#3e4c5c;transform:scaleX(0.9458);transform-origin:0 0;-webkit-text-stroke:0.25px #3e4c5c;">Water</div>
<div class="t" id="t51" style="left:643.08px;top:334.86px;font-size:13.808px;line-height:13.808px;font-weight:400;color:#3e4c5c;transform:scaleX(0.9499);transform-origin:0 0;-webkit-text-stroke:0.25px #3e4c5c;">Management</div>
<div class="t" id="t52" style="left:763.75px;top:326.26px;font-size:13.808px;line-height:13.808px;font-weight:400;color:#3e4c5c;transform:scaleX(0.9182);transform-origin:0 0;-webkit-text-stroke:0.25px #3e4c5c;">Sedep</div>
<div class="t" id="t53" style="left:852.07px;top:317.04px;font-size:13.953px;line-height:13.953px;font-weight:400;color:#3e4c5c;transform:scaleX(0.9322);transform-origin:0 0;-webkit-text-stroke:0.25px #3e4c5c;">In</div>
<div class="t" id="t54" style="left:832.34px;top:334.74px;font-size:13.953px;line-height:13.953px;font-weight:400;color:#3e4c5c;transform:scaleX(0.9426);transform-origin:0 0;-webkit-text-stroke:0.25px #3e4c5c;">progress</div>
<div class="t" id="t55" style="left:927.97px;top:326.26px;font-size:13.808px;line-height:13.808px;font-weight:400;color:#3e4c5c;transform:scaleX(0.8910);transform-origin:0 0;-webkit-text-stroke:0.25px #3e4c5c;">40</div>
<div class="t" id="t56" style="left:997.42px;top:317.04px;font-size:13.953px;line-height:13.953px;font-weight:400;color:#3e4c5c;transform:scaleX(0.9352);transform-origin:0 0;-webkit-text-stroke:0.25px #3e4c5c;">06/12/2024</div>
<div class="t" id="t57" style="left:1014.00px;top:334.99px;font-size:13.663px;line-height:13.663px;font-weight:400;color:#3e4c5c;transform:scaleX(0.9231);transform-origin:0 0;-webkit-text-stroke:0.25px #3e4c5c;">13:33</div>
</body></html>
